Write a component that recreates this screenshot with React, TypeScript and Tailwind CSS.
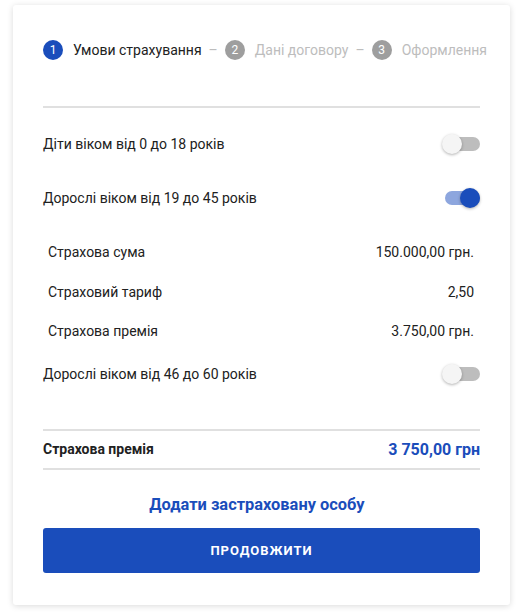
import React from 'react'

function Toggle({ on }: { on?: boolean }) {
  return (
    <div className="relative w-[38px] h-5 flex items-center">
      <div className={`ml-[3px] w-[35px] h-[14px] rounded-full ${on ? 'bg-[#8da6de]' : 'bg-[#bdbdbd]'}`} />
      <div
        className={`absolute top-0 w-5 h-5 rounded-full shadow-[0_1px_3px_rgba(0,0,0,0.3)] ${
          on ? 'right-0 bg-[#1a4dbb]' : 'left-0 bg-[#f5f5f5]'
        }`}
      />
    </div>
  )
}

function Step({ n, label, active }: { n: number; label: string; active?: boolean }) {
  return (
    <div className="flex items-center gap-[10px]">
      <div
        className={`w-5 h-5 rounded-full flex items-center justify-center text-[12px] text-white ${
          active ? 'bg-[#1a4dbb]' : 'bg-[#9e9e9e]'
        }`}
      >
        {n}
      </div>
      <span className={active ? 'text-[#212121]' : 'text-[#bdbdbd]'}>{label}</span>
    </div>
  )
}

function Dash() {
  return <span className="text-[#bdbdbd] mx-[7px]">–</span>
}

function ToggleRow({ label, on, className }: { label: string; on?: boolean; className?: string }) {
  return (
    <div className={`flex items-center justify-between h-9 ${className ?? ''}`}>
      <span className="text-[14px] text-[#212121]">{label}</span>
      <Toggle on={on} />
    </div>
  )
}

function InfoRow({ label, value, className }: { label: string; value: string; className?: string }) {
  return (
    <div className={`flex items-center justify-between h-9 pl-[5px] pr-[6px] text-[14px] text-[#212121] ${className ?? ''}`}>
      <span>{label}</span>
      <span>{value}</span>
    </div>
  )
}

export default function App() {
  return (
    <div className="min-h-screen bg-white pt-[5px] font-['Roboto',sans-serif]">
      <div className="ml-[13px] w-[497px] bg-white rounded-[3px] shadow-[0_1px_6px_rgba(0,0,0,0.15)] px-[30px] pt-[35px] pb-[32px]">
        <div className="flex items-center h-5 text-[14px] whitespace-nowrap">
          <Step n={1} label="Умови страхування" active />
          <Dash />
          <Step n={2} label="Дані договору" />
          <Dash />
          <Step n={3} label="Оформлення" />
        </div>

        <div className="mt-[46px] h-[2px] bg-[#e0e0e0]" />

        <ToggleRow label="Діти віком від 0 до 18 років" className="mt-[18px]" />
        <ToggleRow label="Дорослі віком від 19 до 45 років" on className="mt-[18px]" />

        <InfoRow label="Страхова сума" value="150.000,00 грн." className="mt-[18px]" />
        <InfoRow label="Страховий тариф" value="2,50" className="mt-[4px]" />
        <InfoRow label="Страхова премія" value="3.750,00 грн." className="mt-[3px]" />

        <ToggleRow label="Дорослі віком від 46 до 60 років" className="mt-[7px]" />

        <div className="mt-[37px] h-[2px] bg-[#e0e0e0]" />
        <div className="flex items-center justify-between h-[37px]">
          <span className="text-[14px] font-bold text-[#212121]">Страхова премія</span>
          <span className="text-[16px] font-bold text-[#1a4dbb]">3 750,00 грн</span>
        </div>
        <div className="h-[2px] bg-[#e0e0e0]" />

        <div className="mt-[17px] h-9 flex items-center justify-center pr-[9px]">
          <span className="text-[16.4px] font-bold text-[#1a4dbb]">Додати застраховану особу</span>
        </div>

        <button className="mt-[5px] w-full h-[45px] rounded-[3px] bg-[#1a4dbb] text-white text-[13px] font-bold tracking-[1px]">
          ПРОДОВЖИТИ
        </button>
      </div>
    </div>
  )
}
